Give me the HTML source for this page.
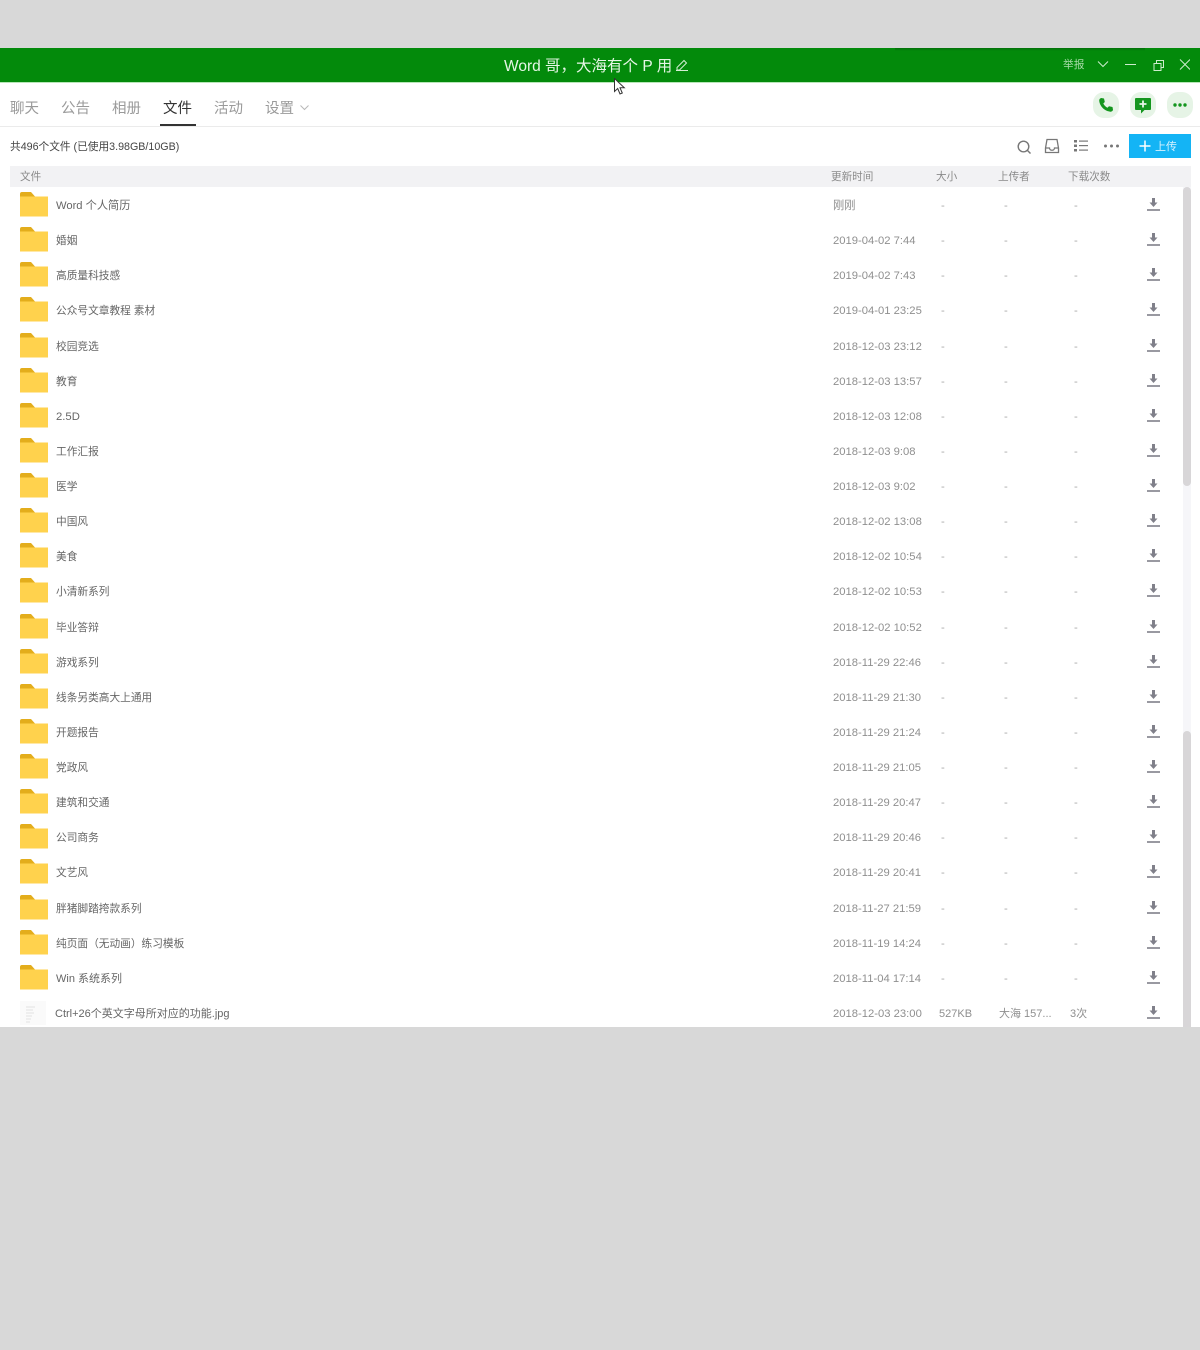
<!DOCTYPE html>
<html lang="zh-CN"><head><meta charset="utf-8"><title>Word 哥，大海有个 P 用</title>
<style>
*{box-sizing:border-box}
html,body{margin:0;padding:0;width:1200px;height:1350px;overflow:hidden;background:#d8d8d8}
body{position:relative;font-family:"Liberation Sans","Noto Sans CJK SC",sans-serif;font-size:11.3px;color:#555}
.a{position:absolute;white-space:nowrap}
#win{position:absolute;left:0;top:48px;width:1200px;height:979px;background:#fff;overflow:hidden}
#bar{position:absolute;left:0;top:0;width:1200px;height:34px;background:#038a0b;border-bottom:0}
#bar2{position:absolute;left:0;top:34px;width:1200px;height:1px;background:#b8e6b8}
.tab{position:absolute;top:51px;font-size:14.5px;line-height:20px;color:#9a9a9a}
.th{position:absolute;top:119px;line-height:21px;color:#8a8a8a;font-size:10.6px}
#list{position:absolute;left:0;top:139px;width:1182px}
.r{position:relative;height:35.14px;line-height:35px}
.r>*{position:absolute}
.f{left:20px;top:5px;width:28px;height:25px}
.n{left:56px;top:2px;color:#666;font-size:10.7px}
.d{left:833px;top:2px;color:#8f8f8f;font-size:11.25px}
.s{left:941px;top:2px;color:#aaa}
.u{left:1004px;top:2px;color:#aaa}
.c{left:1074px;top:2px;color:#aaa}
.i{left:1146px;top:10px;width:15px;height:15px}
.sb{position:absolute;left:1183px;width:8px;background:#d8d6d8}
.bl{filter:blur(.25px)}
</style></head><body>
<svg width="0" height="0" style="position:absolute"><defs>
<symbol id="fo" viewBox="0 0 28 25"><path d="M0 2a2 2 0 0 1 2-2h9l4 4.500h13V5H0z" fill="#e3ad1c"/><rect x="0" y="4.500" width="28" height="20" fill="#ffd24d"/></symbol>
<symbol id="dl" viewBox="0 0 15 15"><path d="M6 1h3v4.500h2.500L7.500 10 3.500 5.500H6z" fill="#80808a"/><rect x="1" y="12.200" width="13" height="1.600" fill="#80808a"/></symbol>
</defs></svg>

<div id="win">
<div id="bar"></div><div id="bar2"></div>
<div class="a" style="left:895px;top:0;width:250px;height:3px;background:linear-gradient(#03700a,#038a0b)"></div>
<div class="a" style="left:504px;top:8px;font-size:15.5px;line-height:22px;color:#e6f6e6">Word 哥，大海有个 P 用</div>
<svg class="a" style="left:675px;top:10px" width="14" height="14" viewBox="0 0 14 14" fill="none" stroke="#d5efd5" stroke-width="1"><path d="M2 9.500 9 2.500l2.500 2.500-7 7H2zM1 12.500h12"/></svg>
<div class="a" style="left:1063px;top:9px;font-size:10.7px;line-height:16px;color:#a9dba9">举报</div>
<svg class="a" style="left:1095px;top:8px" width="95" height="18" viewBox="0 0 95 18" fill="none" stroke="#cdeccd" stroke-width="1"><path d="M3 5.500 8 10.500 13 5.500"/><path d="M30 8.500h11"/><path d="M59 7.500h7v7h-7zM61.500 7.500V4.500h7v7h-2.500"/><path d="M85 3.500l10 10M95 3.500 85 13.500"/></svg>

<div class="tab" style="left:10px">聊天</div>
<div class="tab" style="left:61px">公告</div>
<div class="tab" style="left:112px">相册</div>
<div class="tab" style="left:163px;color:#333">文件</div>
<div class="a" style="left:160px;top:76px;width:36px;height:2px;background:#333"></div>
<div class="tab" style="left:214px">活动</div>
<div class="tab" style="left:265px">设置</div>
<svg class="a" style="left:300px;top:56px" width="9" height="7" viewBox="0 0 9 7" fill="none" stroke="#b8b8b8"><path d="M.5 1.500 4.500 5.500 8.500 1.500"/></svg>

<div class="a" style="left:1093px;top:44px;width:26px;height:26px;border-radius:11px;background:#e6f4e6"></div>
<svg class="a" style="left:1098px;top:49px" width="16" height="16" viewBox="0 0 16 16"><path d="M3.200 1 6 1.500 6.800 5 5.300 6.500c.8 1.800 2.200 3.200 4.100 4.200L11 9.200l3.500.8.500 2.800c-.3 1.300-1.300 2-2.500 1.900C6.500 14.200 1.500 9 1.200 3.500 1.200 2.200 2 1.300 3.200 1z" fill="#14961e"/></svg>
<div class="a" style="left:1130px;top:44px;width:26px;height:26px;border-radius:11px;background:#e6f4e6"></div>
<svg class="a" style="left:1135px;top:50px" width="16" height="16" viewBox="0 0 16 16"><path d="M1 0h14a1 1 0 0 1 1 1v10a1 1 0 0 1-1 1H9.500L6 15.500V12H1a1 1 0 0 1-1-1V1a1 1 0 0 1 1-1z" fill="#14961e"/><path d="M8 2.500v7M4.500 6h7" stroke="#e6f4e6" stroke-width="1.800"/></svg>
<div class="a" style="left:1167px;top:44px;width:26px;height:26px;border-radius:11px;background:#e6f4e6"></div>
<svg class="a" style="left:1172px;top:54px" width="16" height="6" viewBox="0 0 16 6" fill="#14961e"><circle cx="3" cy="3" r="1.700"/><circle cx="8" cy="3" r="1.700"/><circle cx="13" cy="3" r="1.700"/></svg>
<div class="a" style="left:0;top:78px;width:1200px;height:1px;background:#ebebeb"></div>

<div class="a" style="left:10px;top:90px;line-height:18px;font-size:10.7px;color:#444">共496个文件 (已使用3.98GB/10GB)</div>
<svg class="a" style="left:1016px;top:91px" width="16" height="16" viewBox="0 0 16 16" fill="none" stroke="#777" stroke-width="1.400"><circle cx="7.500" cy="7.500" r="5.300"/><path d="M11.500 11.500 14.500 14.500"/></svg>
<svg class="a" style="left:1044px;top:90px" width="16" height="16" viewBox="0 0 16 16" fill="none" stroke="#777" stroke-width="1.300"><path d="M3 1.500h10l1.500 8.500v4.500h-13V10zM1.500 10H5.500c0 3 5 3 5 0h4"/></svg>
<svg class="a" style="left:1074px;top:91px" width="14" height="14" viewBox="0 0 14 14" fill="#777"><rect y="1" width="3" height="2.500"/><rect y="5.500" width="3" height="2.500"/><rect y="10" width="3" height="2.500"/><rect x="5" y="1.500" width="9" height="1.200"/><rect x="5" y="6" width="9" height="1.200"/><rect x="5" y="10.500" width="9" height="1.200"/></svg>
<svg class="a" style="left:1103px;top:95px" width="17" height="6" viewBox="0 0 17 6" fill="#777"><circle cx="2.500" cy="3" r="1.500"/><circle cx="8.500" cy="3" r="1.500"/><circle cx="14.500" cy="3" r="1.500"/></svg>
<div class="a" style="left:1129px;top:86px;width:62px;height:24px;background:#14b4f5"></div>
<svg class="a" style="left:1139px;top:92px" width="12" height="12" viewBox="0 0 12 12" stroke="#fff" stroke-width="1.500"><path d="M6 .5v11M.5 6h11"/></svg>
<div class="a" style="left:1155px;top:91px;line-height:17px;font-size:11px;color:#d6f2ff">上传</div>

<div class="a" style="left:10px;top:118px;width:1181px;height:21px;background:#f2f2f4"></div>
<div class="th" style="left:20px">文件</div>
<div class="th" style="left:831px">更新时间</div>
<div class="th" style="left:936px">大小</div>
<div class="th" style="left:998px">上传者</div>
<div class="th" style="left:1068px">下载次数</div>

<div class="a" style="left:1183px;top:139px;width:8px;height:840px;background:#f6f6f9"></div>
<div class="sb" style="top:139px;height:299px;border-radius:4px"></div>
<div class="sb" style="top:683px;height:296px;border-radius:4px 4px 0 0"></div>

<div id="list" class="bl">
<div class="r"><svg class="f"><use href="#fo"/></svg><span class="n" style="font-size:11.2px">Word 个人简历</span><span class="d">刚刚</span><span class="s">-</span><span class="u">-</span><span class="c">-</span><svg class="i"><use href="#dl"/></svg></div>
<div class="r"><svg class="f"><use href="#fo"/></svg><span class="n">婚姻</span><span class="d">2019-04-02 7:44</span><span class="s">-</span><span class="u">-</span><span class="c">-</span><svg class="i"><use href="#dl"/></svg></div>
<div class="r"><svg class="f"><use href="#fo"/></svg><span class="n">高质量科技感</span><span class="d">2019-04-02 7:43</span><span class="s">-</span><span class="u">-</span><span class="c">-</span><svg class="i"><use href="#dl"/></svg></div>
<div class="r"><svg class="f"><use href="#fo"/></svg><span class="n">公众号文章教程 素材</span><span class="d">2019-04-01 23:25</span><span class="s">-</span><span class="u">-</span><span class="c">-</span><svg class="i"><use href="#dl"/></svg></div>
<div class="r"><svg class="f"><use href="#fo"/></svg><span class="n">校园竞选</span><span class="d">2018-12-03 23:12</span><span class="s">-</span><span class="u">-</span><span class="c">-</span><svg class="i"><use href="#dl"/></svg></div>
<div class="r"><svg class="f"><use href="#fo"/></svg><span class="n">教育</span><span class="d">2018-12-03 13:57</span><span class="s">-</span><span class="u">-</span><span class="c">-</span><svg class="i"><use href="#dl"/></svg></div>
<div class="r"><svg class="f"><use href="#fo"/></svg><span class="n" style="font-size:11.3px">2.5D</span><span class="d">2018-12-03 12:08</span><span class="s">-</span><span class="u">-</span><span class="c">-</span><svg class="i"><use href="#dl"/></svg></div>
<div class="r"><svg class="f"><use href="#fo"/></svg><span class="n">工作汇报</span><span class="d">2018-12-03 9:08</span><span class="s">-</span><span class="u">-</span><span class="c">-</span><svg class="i"><use href="#dl"/></svg></div>
<div class="r"><svg class="f"><use href="#fo"/></svg><span class="n">医学</span><span class="d">2018-12-03 9:02</span><span class="s">-</span><span class="u">-</span><span class="c">-</span><svg class="i"><use href="#dl"/></svg></div>
<div class="r"><svg class="f"><use href="#fo"/></svg><span class="n">中国风</span><span class="d">2018-12-02 13:08</span><span class="s">-</span><span class="u">-</span><span class="c">-</span><svg class="i"><use href="#dl"/></svg></div>
<div class="r"><svg class="f"><use href="#fo"/></svg><span class="n">美食</span><span class="d">2018-12-02 10:54</span><span class="s">-</span><span class="u">-</span><span class="c">-</span><svg class="i"><use href="#dl"/></svg></div>
<div class="r"><svg class="f"><use href="#fo"/></svg><span class="n">小清新系列</span><span class="d">2018-12-02 10:53</span><span class="s">-</span><span class="u">-</span><span class="c">-</span><svg class="i"><use href="#dl"/></svg></div>
<div class="r"><svg class="f"><use href="#fo"/></svg><span class="n">毕业答辩</span><span class="d">2018-12-02 10:52</span><span class="s">-</span><span class="u">-</span><span class="c">-</span><svg class="i"><use href="#dl"/></svg></div>
<div class="r"><svg class="f"><use href="#fo"/></svg><span class="n">游戏系列</span><span class="d">2018-11-29 22:46</span><span class="s">-</span><span class="u">-</span><span class="c">-</span><svg class="i"><use href="#dl"/></svg></div>
<div class="r"><svg class="f"><use href="#fo"/></svg><span class="n">线条另类高大上通用</span><span class="d">2018-11-29 21:30</span><span class="s">-</span><span class="u">-</span><span class="c">-</span><svg class="i"><use href="#dl"/></svg></div>
<div class="r"><svg class="f"><use href="#fo"/></svg><span class="n">开题报告</span><span class="d">2018-11-29 21:24</span><span class="s">-</span><span class="u">-</span><span class="c">-</span><svg class="i"><use href="#dl"/></svg></div>
<div class="r"><svg class="f"><use href="#fo"/></svg><span class="n">党政风</span><span class="d">2018-11-29 21:05</span><span class="s">-</span><span class="u">-</span><span class="c">-</span><svg class="i"><use href="#dl"/></svg></div>
<div class="r"><svg class="f"><use href="#fo"/></svg><span class="n">建筑和交通</span><span class="d">2018-11-29 20:47</span><span class="s">-</span><span class="u">-</span><span class="c">-</span><svg class="i"><use href="#dl"/></svg></div>
<div class="r"><svg class="f"><use href="#fo"/></svg><span class="n">公司商务</span><span class="d">2018-11-29 20:46</span><span class="s">-</span><span class="u">-</span><span class="c">-</span><svg class="i"><use href="#dl"/></svg></div>
<div class="r"><svg class="f"><use href="#fo"/></svg><span class="n">文艺风</span><span class="d">2018-11-29 20:41</span><span class="s">-</span><span class="u">-</span><span class="c">-</span><svg class="i"><use href="#dl"/></svg></div>
<div class="r"><svg class="f"><use href="#fo"/></svg><span class="n">胖猪脚踏挎款系列</span><span class="d">2018-11-27 21:59</span><span class="s">-</span><span class="u">-</span><span class="c">-</span><svg class="i"><use href="#dl"/></svg></div>
<div class="r"><svg class="f"><use href="#fo"/></svg><span class="n">纯页面（无动画）练习模板</span><span class="d">2018-11-19 14:24</span><span class="s">-</span><span class="u">-</span><span class="c">-</span><svg class="i"><use href="#dl"/></svg></div>
<div class="r"><svg class="f"><use href="#fo"/></svg><span class="n" style="font-size:11px">Win 系统系列</span><span class="d">2018-11-04 17:14</span><span class="s">-</span><span class="u">-</span><span class="c">-</span><svg class="i"><use href="#dl"/></svg></div>
<div class="r"><svg class="f" viewBox="0 0 28 25"><rect x="0" y="1" width="26" height="24" fill="#fafafa"/><path d="M6 7h9M6 10h7M6 13h8M6 16h6M6 19h5M6 22h4" stroke="#e2e2e2"/></svg><span class="n" style="left:55px;font-size:11px">Ctrl+26个英文字母所对应的功能.jpg</span><span class="d">2018-12-03 23:00</span><span class="s" style="left:939px;color:#8f8f8f;font-size:11px">527KB</span><span class="u" style="left:999px;color:#8f8f8f;font-size:11px">大海 157...</span><span class="c" style="left:1070px;color:#8f8f8f;font-size:11px">3次</span><svg class="i"><use href="#dl"/></svg></div>
</div>
</div>
<svg class="a" style="left:614px;top:78px" width="12" height="18" viewBox="0 0 12 18"><path d="M.5.500v13l3.200-3 2.300 5.500 2.300-1-2.300-5.200h4.300z" fill="#fff" stroke="#333" stroke-width="1"/></svg>
</body></html>
